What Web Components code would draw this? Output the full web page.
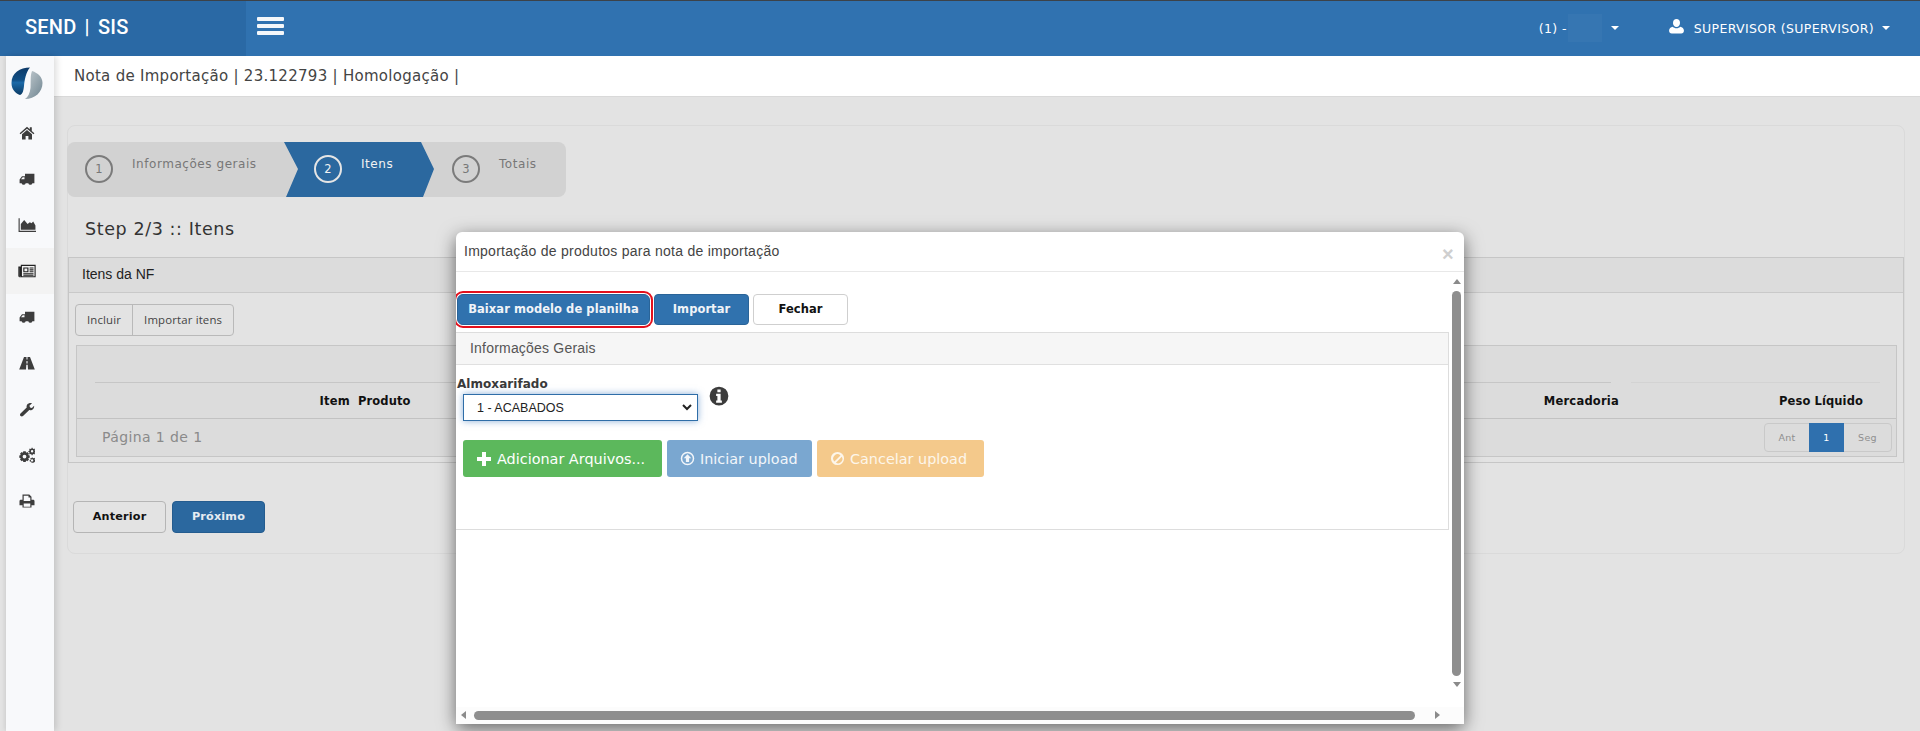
<!DOCTYPE html>
<html lang="pt-BR">
<head>
<meta charset="utf-8">
<title>Nota de Importação</title>
<style>
  html, body { margin: 0; height: 100%; overflow: hidden; background: #e3e3e3; }
  body { font-family: "DejaVu Sans", Verdana, sans-serif; font-size: 12px; color: #333; }
</style>
</head>
<body>
<app-shell>
  <top-bar slot="top"></top-bar>
  <side-nav slot="side"></side-nav>
  <page-title slot="main">Nota de Importação | 23.122793 | Homologação |</page-title>
  <import-wizard slot="main"></import-wizard>
  <import-modal slot="modal"></import-modal>
</app-shell>

<script>
const ICONS = {
  home: '<path d="M8 1.800 0.600 8.200l.9 1L8 3.700l6.500 5.500.9-1-2.600-2.300V2.200h-2v2z"/><path d="M3 9.200V14.400h3.600v-3.300h2.800v3.300H13V9.200L8 5z"/>',
  truck: '<path fill-rule="evenodd" d="M6 2.800h9.400v9.400h-2a2.100 2.100 0 0 1-4.100 0H6.700a2.100 2.100 0 0 1-4.100 0H.6V8.400L3 5.300h3zM2 8.300h3.500V6.200H3.700z"/>',
  chart: '<path d="M.5 2h1v11.200H16v1H.5z"/><path d="M2.500 12.200V7L5.500 3.500 8.500 7 10.500 5.500 12 6.500 13.500 4.800 15.500 8.500V12.200z"/>',
  news: '<path fill-rule="evenodd" d="M2.500 2.500h13.200v11H1.300A1 1 0 0 1 .3 12.500V4h2.200zM3.500 3.500v9.200H1.300V5H1.200v7.500h1.300v.2h12.200V3.500z"/><path fill-rule="evenodd" d="M4.700 4.800h4.600v4.400H4.700zM5.700 5.800v2.400h2.600V5.800z"/><path d="M10.300 4.800h3.500v1h-3.500zM10.300 6.500h3.500v1h-3.500zM10.300 8.200h3.500v1h-3.500zM4.700 10h9.100v1H4.700zM4.700 11.500h9.100v.8H4.700z"/>',
  road: '<path fill-rule="evenodd" d="M5 2h2.500v2.600h1V2H11l4.800 12.500H9L8.700 9.800H7.300L7 14.500H.2zM7.500 6l-.1 2.500h1.200L8.500 6z"/>',
  wrench: '<path fill-rule="evenodd" d="M1.500 12.500 7.700 6.400C7.200 4.200 8.800 2 11.600 2c.6 0 1 .1 1.400.3L10.400 4.700l.7 1.700 1.800.6 2.200-2.300c.4 2.900-2 5-4.800 4.400L4 15c-.7.700-1.700.6-2.400 0-.8-.7-.8-1.700-.1-2.500z"/>',
  cog: '<path fill-rule="evenodd" d="M4.300 4.300h2.400l.4 1.500 1.200-.7 1.700 1.700-.8 1.200 1.500.4v2.400l-1.500.4.800 1.300-1.700 1.700-1.200-.8-.4 1.500H4.300l-.4-1.500-1.200.8L1 12.500l.8-1.300-1.500-.4V8.400l1.500-.4L1 6.800l1.700-1.700 1.200.7zM5.500 7.700a1.900 1.900 0 1 0 0 3.800 1.900 1.900 0 0 0 0-3.800z"/><path fill-rule="evenodd" d="M12.600.8h1l.2.900.8.3.7-.5.8.8-.5.7.3.800.9.200v1l-.9.200-.3.800.5.700-.8.800-.7-.5-.8.300-.2.900h-1l-.2-.9-.8-.3-.7.500-.8-.8.5-.7-.3-.8-.9-.2v-1l.9-.2.3-.8-.5-.7.8-.8.7.5.8-.3zM13.100 3a1.200 1.200 0 1 0 0 2.400 1.200 1.200 0 0 0 0-2.400z"/><path fill-rule="evenodd" d="M12.600 10.200h1l.2.800.8.300.7-.5.8.8-.5.700.3.800.9.200v1l-.9.200-.2.500-1.400.8h-1.400l-1.100-.7-.3-.6-.9-.2v-1l.9-.2.3-.8-.5-.7.8-.8.7.5.8-.3zM13.100 12.200a1.200 1.200 0 1 0 0 2.400 1.200 1.200 0 0 0 0-2.400z"/>',
  print: '<path fill-rule="evenodd" d="M3.500 1.500h6.800l2.200 2.200v3h1.700c.7 0 1.300.6 1.300 1.300v4.200h-3v2.300H3.500v-2.300h-3V8c0-.7.6-1.300 1.300-1.300h1.700zM4.700 2.700v5.200h6.600V4.500H9.500V2.700zM4.700 10.500v3.300h6.600v-3.300z"/>',
  plus: '<path d="M6 1h4v5h5v4h-5v5H6v-5H1V6h5z"/>',
  upload: '<path fill-rule="evenodd" d="M8 .8a7.200 7.200 0 1 0 0 14.400A7.200 7.200 0 0 0 8 .8zm0 1.600a5.600 5.600 0 1 1 0 11.200A5.600 5.600 0 0 1 8 2.400zm0 1L4 7.700h2.300v4h3.400v-4H12z"/>',
  ban: '<path fill-rule="evenodd" d="M8 1a7 7 0 1 0 0 14A7 7 0 0 0 8 1zM4.700 11.200a4.600 4.600 0 0 1 6.500-6.500zm1.600 1.300 6.300-6.300a4.600 4.600 0 0 1-6.300 6.300z"/>',
  info: '<path fill-rule="evenodd" d="M8 .5a7.500 7.500 0 1 0 0 15 7.500 7.500 0 0 0 0-15zM6.700 2.700h2.600v2.200H6.700zM5.700 6.200h3.600v5.400h1v1.700H5.700v-1.700h1V7.900h-1z"/>',
  user: '<path d="M8 1c2 0 3.300 1.600 3.300 3.600S10 8.500 8 8.500 4.700 6.600 4.700 4.600 6 1 8 1z"/><path d="M4.500 8.200C5.400 9.100 6.600 9.600 8 9.600s2.600-.5 3.500-1.400c2 .3 3.500 1.500 3.500 3.800 0 1.500-1 2.500-2.500 2.500h-9C2 14.500 1 13.500 1 12c0-2.300 1.500-3.500 3.500-3.800z"/>'
};

class UiIcon extends HTMLElement {
  connectedCallback() {
    const size = this.getAttribute('size') || 16;
    this.attachShadow({ mode: 'open' });
    this.shadowRoot.innerHTML = `
      <style>
        :host { display: inline-flex; line-height: 0; }
        svg { display: block; fill: currentColor; }
      </style>
      <svg width="${size}" height="${size}" viewBox="0 0 16 16">${ICONS[this.getAttribute('name')] || ''}</svg>`;
  }
}

class AppShell extends HTMLElement {
  connectedCallback() {
    this.attachShadow({ mode: 'open' });
    this.shadowRoot.innerHTML = `
      <style>
        :host { display: grid; grid-template-columns: 54px 1fr; grid-template-rows: 56px 675px; height: 731px; overflow: hidden; }
        .top { grid-column: 1 / 3; }
        .main { min-width: 0; display: flex; flex-direction: column; }
      </style>
      <div class="top"><slot name="top"></slot></div>
      <div><slot name="side"></slot></div>
      <div class="main"><slot name="main"></slot></div>
      <slot name="modal"></slot>`;
  }
}

class TopBar extends HTMLElement {
  connectedCallback() {
    this.attachShadow({ mode: 'open' });
    this.shadowRoot.innerHTML = `
      <style>
        :host { display: flex; height: 55px; background: #3072b0; color: #fff; border-top: 1px solid #3c4248; }
        .brand { width: 221px; padding-left: 25px; background: #2a69a5; font: 500 20px/52px Roboto, sans-serif; letter-spacing: .2px; word-spacing: 3px; white-space: pre; }
        .burger { margin: 16px 0 0 11px; width: 27px; height: 18px; display: flex; flex-direction: column; justify-content: space-between; }
        .burger i { display: block; height: 4px; background: #f4f7fa; border-radius: 1px; }
        .right { margin-left: auto; display: flex; align-items: center; font-size: 12.500px; height: 56px; margin-top: -1px; letter-spacing: .35px; }
        .unit { display: flex; align-items: center; margin-right: 49px; }
        .blur { width: 34px; height: 28px; background: #3676b2; margin: 0 9px 0 1px; }
        .caret { width: 0; height: 0; border: 4px solid transparent; border-top-color: #fff; border-bottom: 0; }
        .user { display: flex; align-items: center; margin-right: 30px; }
        .user span { margin: 0 8px 0 9px; }
        ui-icon { margin-top: -3px; }
      </style>
      <div class="brand">SEND | SIS</div>
      <div class="burger"><i></i><i></i><i></i></div>
      <div class="right">
        <div class="unit">(1) -<div class="blur"></div><div class="caret"></div></div>
        <div class="user"><ui-icon name="user" size="17"></ui-icon><span>SUPERVISOR (SUPERVISOR)</span><div class="caret"></div></div>
      </div>`;
  }
}

class SideNav extends HTMLElement {
  connectedCallback() {
    const items = ['home', 'truck', 'chart', 'news', 'truck', 'road', 'wrench', 'cog', 'print'];
    this.attachShadow({ mode: 'open' });
    this.shadowRoot.innerHTML = `
      <style>
        :host { display: block; height: 675px; margin-left: 6px; background: #f8f9fb; box-shadow: 3px 0 6px rgba(0,0,0,.12), -2px 0 4px rgba(0,0,0,.06); position: relative; z-index: 2; }
        .logo { height: 54px; display: flex; justify-content: center; align-items: center; padding-right: 6px; }
        .item { height: 46px; display: flex; align-items: center; justify-content: center; padding-right: 6px; color: #3d3d3d; }
        .item.on { background: #f3f3f3; color: #222; }
      </style>
      <div class="logo">
        <svg width="32" height="33" viewBox="0 0 32 33">
          <defs>
            <linearGradient id="a" x1="0" y1="0" x2="0" y2="1"><stop offset="0" stop-color="#0d3a68"/><stop offset=".45" stop-color="#114f85"/><stop offset=".55" stop-color="#1c6aa8"/><stop offset="1" stop-color="#0b3a64"/></linearGradient>
            <linearGradient id="b" x1="0" y1="0" x2="1" y2="1"><stop offset="0" stop-color="#c6ced2"/><stop offset="1" stop-color="#6e8490"/></linearGradient>
          </defs>
          <path fill="url(#a)" d="M19 .5C9 .5.5 6 .5 16 .5 22 4 26 9 28c3-1 3.500-5 4-9 .5-6 2-14 6-18.500z"/>
          <path fill="url(#b)" d="M21 4c6 2 10.500 6 10.500 12 0 9-7.500 16-17.500 16 3-2 5-6 5.500-11 .5-6-.5-12 1.500-17z"/>
        </svg>
      </div>
      ${items.map(n => `<div class="item${n === 'news' ? ' on' : ''}"><ui-icon name="${n}" size="${n === 'chart' || n === 'news' ? 18 : 16}"></ui-icon></div>`).join('')}`;
  }
}

class PageTitle extends HTMLElement {
  connectedCallback() {
    this.attachShadow({ mode: 'open' });
    this.shadowRoot.innerHTML = `
      <style>
        :host { display: block; flex: none; height: 40px; padding-left: 20px; background: #fff; border-bottom: 1px solid #d9d9d9; font-size: 15px; line-height: 41px; letter-spacing: .28px; color: #444; white-space: nowrap; }
      </style>
      <slot></slot>`;
  }
}

class WizardStep extends HTMLElement {
  connectedCallback() {
    const active = this.hasAttribute('active');
    this.attachShadow({ mode: 'open' });
    this.shadowRoot.innerHTML = `
      <style>
        :host { display: flex; flex: none; height: 55px; color: ${active ? '#f2f2f2' : '#777'}; font-size: 12px; letter-spacing: .55px; }
        .num { box-sizing: border-box; width: 28px; height: 28px; margin: 13px 0 0 0; border: 2px solid ${active ? '#e5e5e5' : '#7b7b7b'}; border-radius: 50%; display: flex; align-items: center; justify-content: center; font-size: 11.500px; letter-spacing: 0; }
        .label { margin: 14px 0 0 19px; line-height: 16px; }
      </style>
      <div class="num">${this.getAttribute('num')}</div>
      <div class="label"><slot></slot></div>`;
  }
}

class ImportWizard extends HTMLElement {
  connectedCallback() {
    this.attachShadow({ mode: 'open' });
    this.shadowRoot.innerHTML = `
      <style>
        :host { display: block; box-sizing: border-box; margin: 28px 15px 0 13px; height: 429px; background: #e3e3e3; border: 1px solid #dadada; border-radius: 8px; position: relative; }
        .steps { display: flex; width: 499px; height: 55px; margin: 16px 0 0 -1px; background: #d2d2d2; border-radius: 8px; position: relative; }
        .s1 { margin-left: 18px; }
        .chev { position: absolute; left: 217px; top: 0; width: 150px; height: 55px; background: #2b689f; clip-path: polygon(0 0, 137px 0, 150px 27px, 139px 55px, 2px 55px, 14px 27px); }
        .s2 { position: absolute; left: 247px; top: 0; }
        .s3 { position: absolute; left: 385px; top: 0; }
        h2 { margin: 21px 0 0 17px; font-size: 17.500px; font-weight: 400; line-height: 22px; letter-spacing: .6px; color: #333; }
        .foot { display: flex; gap: 6px; margin: 38px 0 0 5px; }
        .btn { box-sizing: border-box; width: 93px; height: 32px; border: 1px solid #b5b5b5; border-radius: 4px; font-size: 11.200px; font-weight: 700; line-height: 30px; text-align: center; letter-spacing: .2px; color: #111; }
        .btn.primary { background: #2b689f; border-color: #245c8f; color: #e6ecf2; }
      </style>
      <div class="steps">
        <div class="chev"></div>
        <wizard-step class="s1" num="1">Informações gerais</wizard-step>
        <wizard-step class="s2" num="2" active>Itens</wizard-step>
        <wizard-step class="s3" num="3">Totais</wizard-step>
      </div>
      <h2>Step 2/3 :: Itens</h2>
      <items-panel></items-panel>
      <div class="foot"><div class="btn">Anterior</div><div class="btn primary">Próximo</div></div>`;
  }
}

class ItemsPanel extends HTMLElement {
  connectedCallback() {
    this.attachShadow({ mode: 'open' });
    this.shadowRoot.innerHTML = `
      <style>
        :host { display: block; box-sizing: border-box; height: 206px; margin: 17px 0 0 0; border: 1px solid #c6c6c6; }
        .head { box-sizing: border-box; height: 35px; padding-left: 13px; background: #dcdcdc; border-bottom: 1px solid #c9c9c9; font: 14px/33px "Liberation Sans", Arial, sans-serif; color: #222; }
        .tools { display: inline-flex; margin: 11px 0 0 6px; height: 32px; box-sizing: border-box; border: 1px solid #b9b9b9; border-radius: 4px; font: 11.400px/30px "Open Sans", sans-serif; color: #444; letter-spacing: .15px; }
        .tools span { padding: 0 11px; }
        .tools span + span { border-left: 1px solid #b9b9b9; }
        .grid { box-sizing: border-box; height: 112px; margin: 9px 6px 0 7px; background: #dcdcdc; border: 1px solid #c6c6c6; display: flex; flex-direction: column; }
        .groups { display: flex; height: 37px; flex: none; padding-left: 18px; }
        .groups i { height: 37px; box-sizing: border-box; border-bottom: 1px solid #cdcdcd; }
        .groups i:first-child { flex: 1; border-bottom-color: #c6c6c6; }
        .groups i:last-child { width: 249px; margin: 0 16px 0 20px; border-bottom-color: #d3d3d3; }
        .cols { display: grid; grid-template-columns: 273px auto 1fr 244px; padding-right: 33px; height: 36px; flex: none; box-sizing: border-box; border-bottom: 1px solid #c2c2c2; font-weight: 700; font-size: 11.500px; line-height: 36px; color: #111; letter-spacing: .22px; white-space: nowrap; }
        .cols span { text-align: right; }
        .cols .p { padding-left: 8px; text-align: left; letter-spacing: .1px; }
        .cols span:last-child { letter-spacing: .1px; }
        .page { display: flex; justify-content: space-between; align-items: center; flex: 1; padding: 0 4px 1px 25px; font-size: 14px; color: #8a8a8a; letter-spacing: .4px; }
      </style>
      <div class="head">Itens da NF</div>
      <div class="tools"><span>Incluir</span><span>Importar itens</span></div>
      <div class="grid">
        <div class="groups"><i></i><i></i></div>
        <div class="cols"><span>Item</span><span class="p">Produto</span><span>Mercadoria</span><span>Peso Líquido</span></div>
        <div class="page">Página 1 de 1<pager-links></pager-links></div>
      </div>`;
  }
}

class PagerLinks extends HTMLElement {
  connectedCallback() {
    this.attachShadow({ mode: 'open' });
    this.shadowRoot.innerHTML = `
      <style>
        :host { display: flex; height: 29px; box-sizing: border-box; border: 1px solid #c9c9c9; border-radius: 4px; font-size: 9.500px; line-height: 27px; text-align: center; color: #8f8f8f; letter-spacing: .3px; }
        .ant { width: 44px; }
        .cur { width: 35px; margin: -1px 0; height: 29px; line-height: 29px; background: #2f70ae; color: #fff; }
        .seg { width: 47px; }
      </style>
      <div class="ant">Ant</div><div class="cur">1</div><div class="seg">Seg</div>`;
  }
}

class ImportModal extends HTMLElement {
  connectedCallback() {
    this.attachShadow({ mode: 'open' });
    this.shadowRoot.innerHTML = `
      <style>
        :host { position: absolute; left: 456px; top: 232px; width: 1008px; height: 492px; box-sizing: border-box; background: #fff; border-radius: 6px; box-shadow: 0 5px 18px rgba(0,0,0,.55); display: flex; flex-direction: column; z-index: 5; }
        .title { position: relative; flex: none; box-sizing: border-box; height: 40px; padding-left: 8px; border-bottom: 1px solid #e8e8e8; font: 14px/38px "Liberation Sans", Arial, sans-serif; letter-spacing: .26px; color: #444; }
        .close { position: absolute; top: 7px; right: 10px; font: 700 20px/30px "Liberation Sans", Arial, sans-serif; color: #cfcfcf; }
        .body { flex: 1; min-height: 0; display: grid; grid-template-columns: 1fr 15px; grid-template-rows: 1fr 17px; }
        .content { min-width: 0; padding-top: 22px; overflow: hidden; }
        .actions { display: flex; gap: 4px; height: 31px; }
        .btn { box-sizing: border-box; height: 31px; border: 1px solid #2a6498; border-radius: 4px; background: #3072ae; color: #f0f4f8; font-size: 11.500px; font-weight: 700; line-height: 29px; text-align: center; letter-spacing: .06px; }
        .baixar { box-shadow: 0 0 0 1px #fff, 0 0 0 3px #e3101c; border-radius: 6px; margin-left: 1px; width: 193px; }
        .importar { width: 95px; }
        .fechar { width: 95px; background: #fff; border-color: #cfcfcf; color: #111; }
        .panel { box-sizing: border-box; height: 198px; margin: 7px -7px 0 0; width: 993px; border: 1px solid #ddd; border-left: 0; }
        .phead { box-sizing: border-box; height: 32px; padding-left: 14px; background: #f6f6f6; border-bottom: 1px solid #e0e0e0; font: 14px/31px "Liberation Sans", Arial, sans-serif; letter-spacing: .2px; color: #555; }
        label { display: block; margin: 11px 0 0 1px; font-size: 12px; font-weight: 700; line-height: 16px; color: #3a3a3a; letter-spacing: .05px; }
        .row { display: flex; align-items: flex-start; margin: 2px 0 0 7px; gap: 11px; }
        .select { box-sizing: border-box; width: 235px; height: 27px; padding: 0 5px 0 13px; display: flex; align-items: center; justify-content: space-between; background: #fff; border: 1px solid #2f6ea8; box-shadow: 0 0 7px rgba(60,120,190,.6); font: 12.500px "Liberation Sans", Arial, sans-serif; color: #222; }
        .select svg { display: block; }
        .row ui-icon { margin: -8px 0 0 0; color: #3c3c3c; }
        .uploads { display: flex; gap: 5px; margin: 19px 0 0 7px; }
        .up { box-sizing: border-box; height: 37px; padding-left: 13px; display: flex; align-items: center; gap: 5px; border-radius: 3px; color: #fff; font-size: 14.400px; white-space: nowrap; }
        .green { width: 199px; background: #5cb85c; }
        .blue { width: 145px; background: #7aa7d0; color: #f2f6fa; }
        .orange { width: 167px; background: #f4c98b; color: #fdf6ea; }
        .vbar { background: #fff; display: flex; flex-direction: column; align-items: center; padding-top: 7px; }
        .thumbv { width: 9px; height: 385px; margin-top: 7px; background: #8e8e8e; border-radius: 5px; }
        .hbar { display: flex; align-items: center; background: #fcfcfc; padding-bottom: 1px; }
        .thumbh { width: 941px; height: 9px; margin-left: 8px; background: #8e8e8e; border-radius: 5px; }
        .arrow { width: 0; height: 0; border: 4px solid transparent; flex: none; }
        .au { border-top: 0; border-bottom: 5px solid #8a8a8a; }
        .ad { border-bottom: 0; border-top: 5px solid #8a8a8a; margin-top: 6px; }
        .al { border-left: 0; border-right: 5px solid #8a8a8a; margin-left: 5px; }
        .ar { border-right: 0; border-left: 5px solid #8a8a8a; margin-left: 20px; }
        .corner { background: #fcfcfc; }
      </style>
      <div class="title">Importação de produtos para nota de importação<span class="close">×</span></div>
      <div class="body">
        <div class="content">
          <div class="actions">
            <div class="btn baixar">Baixar modelo de planilha</div>
            <div class="btn importar">Importar</div>
            <div class="btn fechar">Fechar</div>
          </div>
          <div class="panel">
            <div class="phead">Informações Gerais</div>
            <label>Almoxarifado</label>
            <div class="row">
              <div class="select">1 - ACABADOS
                <svg width="10" height="7" viewBox="0 0 10 7"><path d="M1 1l4 4 4-4" fill="none" stroke="#222" stroke-width="2"/></svg>
              </div>
              <ui-icon name="info" size="20"></ui-icon>
            </div>
            <div class="uploads">
              <div class="up green"><ui-icon name="plus" size="16"></ui-icon>Adicionar Arquivos...</div>
              <div class="up blue"><ui-icon name="upload" size="15"></ui-icon>Iniciar upload</div>
              <div class="up orange"><ui-icon name="ban" size="15"></ui-icon>Cancelar upload</div>
            </div>
          </div>
        </div>
        <div class="vbar"><div class="arrow au"></div><div class="thumbv"></div><div class="arrow ad"></div></div>
        <div class="hbar"><div class="arrow al"></div><div class="thumbh"></div><div class="arrow ar"></div></div>
        <div class="corner"></div>
      </div>`;
  }
}

customElements.define('ui-icon', UiIcon);
customElements.define('app-shell', AppShell);
customElements.define('top-bar', TopBar);
customElements.define('side-nav', SideNav);
customElements.define('page-title', PageTitle);
customElements.define('wizard-step', WizardStep);
customElements.define('import-wizard', ImportWizard);
customElements.define('items-panel', ItemsPanel);
customElements.define('pager-links', PagerLinks);
customElements.define('import-modal', ImportModal);
</script>
</body>
</html>
